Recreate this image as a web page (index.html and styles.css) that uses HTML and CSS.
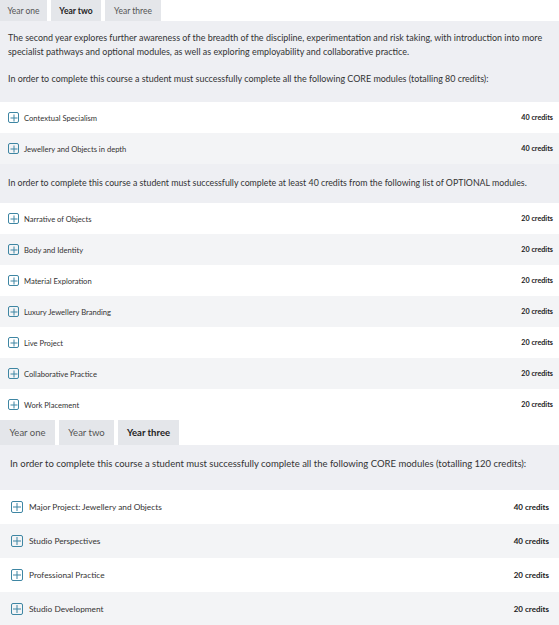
FILE: index.html
```html
<!DOCTYPE html>
<html>
<head>
<meta charset="utf-8">
<link rel="stylesheet" href="styles.css">
</head>
<body>
<section class="year small">
  <div class="tabs">
    <div class="tab">Year one</div>
    <div class="tab active">Year two</div>
    <div class="tab">Year three</div>
  </div>
  <div class="intro">
    <p>The second year explores further awareness of the breadth of the discipline, experimentation and risk taking, with introduction into more specialist pathways and optional modules, as well as exploring employability and collaborative practice.</p>
    <p>In order to complete this course a student must successfully complete all the following CORE modules (totalling 80 credits):</p>
  </div>
  <ul class="modules">
    <li class="row"><span class="plus"></span><span class="name">Contextual Specialism</span><span class="credits">40 credits</span></li>
    <li class="row"><span class="plus"></span><span class="name">Jewellery and Objects in depth</span><span class="credits">40 credits</span></li>
  </ul>
  <div class="intro mid">
    <p>In order to complete this course a student must successfully complete at least 40 credits from the following list of OPTIONAL modules.</p>
  </div>
  <ul class="modules">
    <li class="row"><span class="plus"></span><span class="name">Narrative of Objects</span><span class="credits">20 credits</span></li>
    <li class="row"><span class="plus"></span><span class="name">Body and Identity</span><span class="credits">20 credits</span></li>
    <li class="row"><span class="plus"></span><span class="name">Material Exploration</span><span class="credits">20 credits</span></li>
    <li class="row"><span class="plus"></span><span class="name">Luxury Jewellery Branding</span><span class="credits">20 credits</span></li>
    <li class="row"><span class="plus"></span><span class="name">Live Project</span><span class="credits">20 credits</span></li>
    <li class="row"><span class="plus"></span><span class="name">Collaborative Practice</span><span class="credits">20 credits</span></li>
    <li class="row"><span class="plus"></span><span class="name">Work Placement</span><span class="credits">20 credits</span></li>
  </ul>
</section>
<section class="year large">
  <div class="tabs">
    <div class="tab">Year one</div>
    <div class="tab">Year two</div>
    <div class="tab active">Year three</div>
  </div>
  <div class="intro">
    <p>In order to complete this course a student must successfully complete all the following CORE modules (totalling 120 credits):</p>
  </div>
  <ul class="modules">
    <li class="row"><span class="plus"></span><span class="name">Major Project: Jewellery and Objects</span><span class="credits">40 credits</span></li>
    <li class="row"><span class="plus"></span><span class="name">Studio Perspectives</span><span class="credits">40 credits</span></li>
    <li class="row"><span class="plus"></span><span class="name">Professional Practice</span><span class="credits">20 credits</span></li>
    <li class="row"><span class="plus"></span><span class="name">Studio Development</span><span class="credits">20 credits</span></li>
  </ul>
</section>
</body>
</html>
```
FILE: styles.css
```css
* { box-sizing: border-box; }
html, body { margin: 0; padding: 0; background: #fff; }
body { font-family: Lato, "Open Sans", sans-serif; color: #333; width: 559px; overflow: hidden; }
p { margin: 0; }
ul { list-style: none; margin: 0; padding: 0; }

.tabs { display: flex; gap: 4px; background: #fff; }
.tab { background: #e4e6ea; color: #555; display: flex; align-items: center; justify-content: center; white-space: nowrap; }
.tab.active { font-weight: 700; color: #222; }

.intro { background: #eeeff3; color: #333; }
.row { display: flex; align-items: center; }
.row:nth-child(odd) { background: #fff; }
.row:nth-child(even) { background: #f3f4f6; }
.name { flex: 1; color: #333; }
.credits { font-weight: 700; color: #222; }
.plus { position: relative; flex: none; border: 1px solid #3e86a3; border-radius: 2px; }
.plus::before, .plus::after { content: ""; position: absolute; background: #3e86a3; left: 50%; top: 50%; transform: translate(-50%, -50%); }

/* small (top) */
.small .tabs { height: 21px; }
.small .tab { font-size: 8.5px; }
.small .tab:nth-child(1) { width: 47px; }
.small .tab:nth-child(2) { width: 50px; }
.small .tab:nth-child(3) { width: 56px; }
.small .intro { font-size: 8.95px; line-height: 14px; padding: 10px 8px 16px; }
.small .intro p + p { margin-top: 13px; }
.small .intro.mid { font-size: 8.8px; padding: 12px 8px 13px; }
.small .row { height: 31px; padding: 0 6px 0 8px; font-size: 7.6px; }
.small .plus { width: 11px; height: 11px; margin-right: 5px; }
.small .plus::before { width: 7px; height: 1px; }
.small .plus::after { width: 1px; height: 7px; }
.small .credits { font-size: 7.2px; }

/* large (bottom) */
.large .tabs { height: 25px; }
.large .tab { font-size: 9.5px; }
.large .tab:nth-child(1) { width: 55px; }
.large .tab:nth-child(2) { width: 55px; }
.large .tab:nth-child(3) { width: 61px; }
.large .intro { font-size: 9.5px; line-height: 14px; padding: 12px 10px 19px; }
.large .row { height: 34px; padding: 0 10px 0 11px; font-size: 8.3px; }
.large .plus { width: 12px; height: 12px; margin-right: 6px; }
.large .plus::before { width: 8px; height: 1px; }
.large .plus::after { width: 1px; height: 8px; }
.large .credits { font-size: 8px; }
```
